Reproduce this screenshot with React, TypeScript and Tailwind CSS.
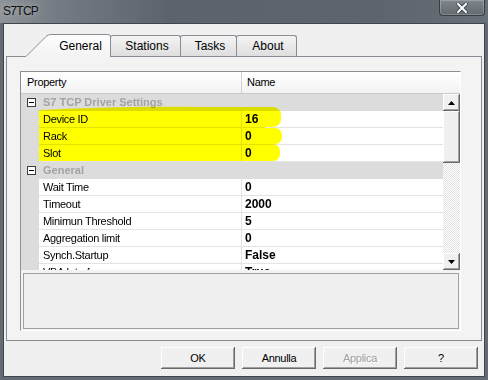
import React from "react";

type Row = { cat?: string; n?: string; v?: string };

const rows: Row[] = [
  { cat: "S7 TCP Driver Settings" },
  { n: "Device ID", v: "16" },
  { n: "Rack", v: "0" },
  { n: "Slot", v: "0" },
  { cat: "General" },
  { n: "Wait Time", v: "0" },
  { n: "Timeout", v: "2000" },
  { n: "Minimun Threshold", v: "5" },
  { n: "Aggregation limit", v: "0" },
  { n: "Synch.Startup", v: "False" },
  { n: "VBA Interface", v: "True" },
];

function MinusBox() {
  return (
    <svg width="9" height="9" viewBox="0 0 9 9">
      <rect x="0.5" y="0.5" width="8" height="8" fill="#fff" stroke="#3c3c3c" />
      <line x1="2" y1="4.5" x2="7" y2="4.5" stroke="#000" />
    </svg>
  );
}

function ScrollBtn({ up }: { up: boolean }) {
  return (
    <div className="h-[17px] w-[17px] bg-[#f0f0f0] shadow-[inset_-1px_-1px_#696969,inset_1px_1px_#ffffff,inset_-2px_-2px_#a0a0a0] flex items-center justify-center">
      <svg width="7" height="4" viewBox="0 0 7 4">
        {up ? <path d="M3.5 0 L7 4 L0 4 Z" fill="#000" /> : <path d="M0 0 L7 0 L3.5 4 Z" fill="#000" />}
      </svg>
    </div>
  );
}

function Btn({ label, disabled }: { label: string; disabled?: boolean }) {
  return (
    <div className="w-[74px] h-[22px] bg-[#f0f0f0] shadow-[inset_-1px_-1px_#696969,inset_1px_1px_#ffffff,inset_-2px_-2px_#a0a0a0,inset_2px_2px_#f0f0f0] flex items-center justify-center">
      <span
        className={
          "text-[11px] leading-none tracking-[-0.3px] " +
          (disabled ? "text-[#a0a0a0] [text-shadow:1px_1px_#ffffff]" : "text-black")
        }
      >
        {label}
      </span>
    </div>
  );
}

function Tab({ label, w }: { label: string; w: string }) {
  return (
    <div
      className={
        "h-[21px] mb-[1px] -ml-[1px] border border-b-0 border-[#898c95] rounded-t-[3px] bg-[linear-gradient(#f4f4f4,#dedede)] flex items-center justify-center pl-[3px] text-[12px] text-black " +
        w
      }
    >
      {label}
    </div>
  );
}

export default function App() {
  return (
    <div className="w-[488px] h-[380px] bg-[#646b72] flex flex-col font-['Liberation_Sans',Arial,sans-serif] overflow-hidden">
      {/* Title bar */}
      <div className="h-[23px] shrink-0 flex items-start justify-between bg-[linear-gradient(to_right,#8e9499_0px,#747b82_55px,#5c636a_170px,#5d646b_380px,#687077_488px)]">
        <span className="pl-[3px] pt-[4px] text-[12px] leading-[14px] tracking-[-0.7px] text-[#111] [text-shadow:0_0_6px_rgba(255,255,255,0.5)]">
          S7TCP
        </span>
        <div className="mr-[3px] w-[46px] h-[16px] rounded-b-[4px] border border-t-0 border-[#383d42] bg-[linear-gradient(#7f868d,#62696f)] shadow-[inset_0_0_0_1px_rgba(255,255,255,0.22)] flex items-center justify-center">
          <svg width="12" height="10" viewBox="0 0 12 10">
            <path d="M2 1 L10 9 M10 1 L2 9" stroke="#3a3f44" strokeWidth="3.6" strokeLinecap="square" />
            <path d="M2 1 L10 9 M10 1 L2 9" stroke="#ffffff" strokeWidth="2" strokeLinecap="square" />
          </svg>
        </div>
      </div>

      {/* Client area */}
      <div className="flex-1 mx-[3px] mb-[3px] border border-[#3f454b] bg-[#f0f0f0] flex flex-col pl-[2px] pr-[2px] pt-[10px] pb-[7px]">
        {/* Tab strip */}
        <div className="h-[23px] relative z-10 flex items-end pl-[20px] -mb-[1px]">
          <div className="relative w-[85px] h-[23px] flex items-center justify-center pl-[24px] text-[12px] text-black">
            <svg className="absolute left-0 top-0" width="85" height="23" viewBox="0 0 85 23">
              <defs>
                <linearGradient id="selTab" x1="0" y1="0" x2="0" y2="1">
                  <stop offset="0" stopColor="#fdfdfd" />
                  <stop offset="1" stopColor="#f3f3f3" />
                </linearGradient>
              </defs>
              <path d="M0 23 L0 22 L20 2.5 Q22 0.5 25 0.5 L82 0.5 Q84.5 0.5 84.5 3 L84.5 23 Z" fill="url(#selTab)" />
              <path d="M0 22.5 L20 2.5 Q22 0.5 25 0.5 L82 0.5 Q84.5 0.5 84.5 3 L84.5 23" fill="none" stroke="#898c95" />
            </svg>
            <span className="relative">General</span>
          </div>
          <Tab label="Stations" w="w-[71px]" />
          <Tab label="Tasks" w="w-[57px]" />
          <Tab label="About" w="w-[61px]" />
        </div>

        {/* Tab panel */}
        <div className="h-[285px] border border-[#898c95] bg-[#f3f3f3] pl-[13px] pt-[14px]">
          {/* Property grid */}
          <div className="w-[441px] h-[260px] border-l border-t border-[#8e8f8f] border-r border-r-[#ffffff] border-b border-b-[#ffffff] flex flex-col">
            {/* Header */}
            <div className="h-[22px] shrink-0 flex border-b border-[#c9c9c9] bg-[linear-gradient(#ffffff,#f3f3f3)] text-[11px] tracking-[-0.3px] text-black">
              <div className="w-[221px] border-r border-[#d0d0d0] pl-[6px] flex items-center">Property</div>
              <div className="flex-1 pl-[5px] flex items-center">Name</div>
            </div>
            {/* Body */}
            <div className="h-[176px] shrink-0 flex">
              <div className="relative flex-1 overflow-hidden bg-white isolate">
                {rows.map((r, i) =>
                  r.cat ? (
                    <div key={i} className="h-[17px] flex items-center bg-[#dcdcdc]">
                      <div className="w-[22px] pl-[6px] flex items-center">
                        <MinusBox />
                      </div>
                      <span className="text-[11px] font-bold text-[#a3a3a3]">{r.cat}</span>
                    </div>
                  ) : (
                    <div key={i} className="h-[17px] flex">
                      <div className="w-[18px] bg-[#dcdcdc]" />
                      <div className="w-[203px] border-r border-b border-[#e3e3e3] pl-[4px] flex items-center text-[11px] tracking-[-0.3px] text-black whitespace-nowrap">
                        {r.n}
                      </div>
                      <div className="flex-1 border-b border-[#e3e3e3] pl-[3px] flex items-center text-[12px] font-bold text-black">
                        {r.v}
                      </div>
                    </div>
                  )
                )}
                <svg className="absolute left-0 top-0 pointer-events-none mix-blend-multiply" width="422" height="176">
                  <g fill="#ffff00">
                    <path d="M18 16 C60 14 120 12 180 13 L244 13 L244 67 L18 67 Z" />
                    <rect x="150" y="13" width="110" height="20" rx="8" />
                    <rect x="150" y="34" width="111" height="16" rx="7" />
                    <rect x="150" y="50" width="109" height="17" rx="7" />
                  </g>
                </svg>
              </div>
              <div className="w-[17px] flex flex-col">
                <ScrollBtn up />
                <div className="h-[52px] bg-[#f0f0f0] shadow-[inset_-1px_-1px_#696969,inset_1px_1px_#ffffff,inset_-2px_-2px_#a0a0a0]" />
                <div className="flex-1 bg-[repeating-conic-gradient(#ffffff_0_25%,#e2e2e2_0_50%)] bg-[length:2px_2px]" />
                <ScrollBtn up={false} />
              </div>
            </div>
            {/* Description */}
            <div className="mt-[3px] ml-[2px] w-[436px] h-[56px] border border-[#a0a0a0] bg-[#f0f0f0]" />
          </div>
        </div>

        {/* Buttons */}
        <div className="mt-[6px] flex justify-end gap-[7px] pr-[4px]">
          <Btn label="OK" />
          <Btn label="Annulla" />
          <Btn label="Applica" disabled />
          <Btn label="?" />
        </div>
      </div>
    </div>
  );
}
